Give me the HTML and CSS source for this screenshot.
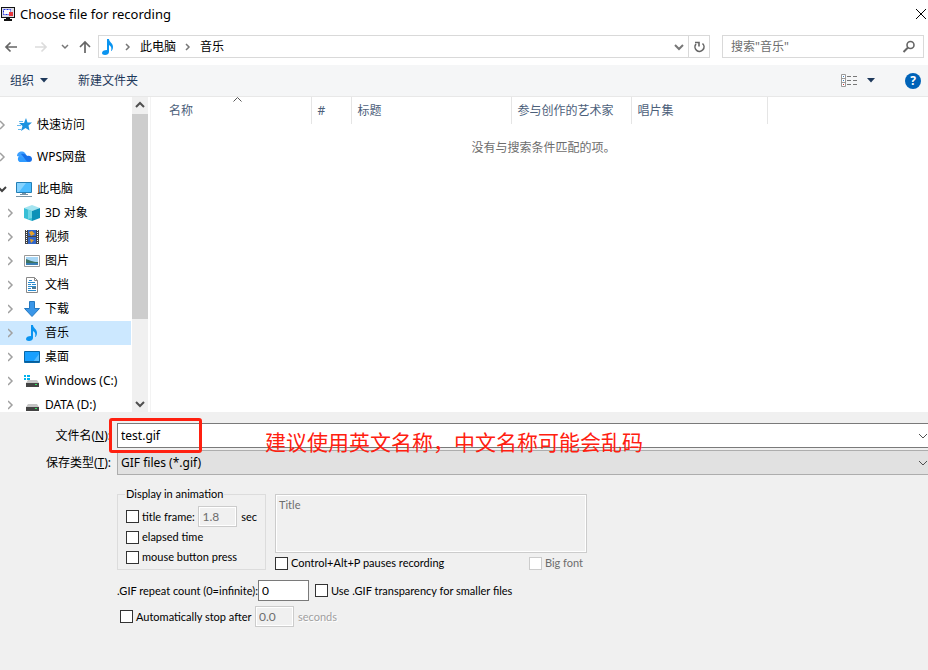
FILE: index.html
```
<!DOCTYPE html>
<html lang="zh-CN">
<head>
    <meta charset="UTF-8">
    <meta name="viewport" content="width=device-width, initial-scale=1.0">
    <title>Choose file for recording</title>
    <link rel="stylesheet" href="styles.css">
</head>
<body>
    <!-- Title Bar -->
    <header class="titlebar">
        <svg class="icon" viewBox="0 0 16 16"><path fill="#111" d="M0 1h14v11H0zM5 12h4v1h2v2H3v-2h2z"/><path fill="#dcdce8" d="M1 2h12v9H1z"/><path fill="#fff" stroke="#1c2ce0" stroke-dasharray="2 1" d="M2.500 3.500h7v5h-7z"/><path fill="#e8383c" d="M8 6h4v4H8z"/></svg>
        <h1>Choose file for recording</h1>
        <button type="button" class="close" aria-label="Close"><svg width="12" height="12" viewBox="0 0 12 12"><path d="M1 1l10 10M11 1L1 11" stroke="#000" fill="none"/></svg></button>
    </header>

    <!-- Navigation -->
    <nav class="navrow">
        <div class="history">
            <button type="button" aria-label="Back"><svg viewBox="0 0 16 16"><path d="M14 8H3M7.500 3.500L3 8l4.500 4.500" stroke="#666" stroke-width="1.700"/></svg></button>
            <button type="button" aria-label="Forward"><svg viewBox="0 0 16 16"><path d="M2 8h11M8.500 3.500L13 8l-4.500 4.500" stroke="#dcdcdc" stroke-width="1.700"/></svg></button>
            <button type="button" class="small" aria-label="Recent"><svg viewBox="0 0 10 16"><path d="M2 6l3 3 3-3" stroke="#777" stroke-width="1.500"/></svg></button>
            <button type="button" aria-label="Up"><svg viewBox="0 0 16 16"><path d="M8 14V3M3 8l5-5 5 5" stroke="#666" stroke-width="1.700"/></svg></button>
        </div>
        <div class="address">
            <svg class="icon" viewBox="0 0 16 16"><path fill="#0a94f0" d="M7 0h2c0 3 4 4 4 8 0 2-1 4-2 4 1-3 0-5-2-6v7c0 2-2 3-4 3s-3-1-3-2c0-2 2-3 5-3z"/></svg>
            <svg class="sep" viewBox="0 0 8 16"><path d="M2 5l3 3-3 3"/></svg>
            <a href="#">此电脑</a>
            <svg class="sep" viewBox="0 0 8 16"><path d="M2 5l3 3-3 3"/></svg>
            <a href="#">音乐</a>
            <button type="button" class="drop" aria-label="History"><svg viewBox="0 0 16 16"><path d="M4 6l4 4 4-4" stroke="#777" stroke-width="2"/></svg></button>
            <button type="button" class="refresh" aria-label="Refresh"><svg viewBox="0 0 16 16"><path d="M11.500 4.500A4.500 4.500 0 1 1 5 5M4 3.500h4v4" stroke="#666" stroke-width="1.600"/></svg></button>
        </div>
        <div class="search">
            <input type="text" aria-label="搜索" placeholder='搜索"音乐"'>
            <svg class="icon" viewBox="0 0 16 16"><circle cx="9.500" cy="6" r="3.500" fill="none" stroke="#666" stroke-width="1.600"/><path d="M7 8.500L2.500 13" stroke="#666" stroke-width="2"/></svg>
        </div>
    </nav>

    <!-- Toolbar -->
    <div class="toolbar">
        <button type="button" class="organize">组织 <svg width="8" height="5" viewBox="0 0 8 5"><path fill="#1e395b" d="M0 0h8L4 4.500z"/></svg></button>
        <button type="button">新建文件夹</button>
        <button type="button" class="view" aria-label="View">
            <svg width="18" height="14" viewBox="0 0 18 14"><path fill="#fff" stroke="#999" d="M.5.500h4v12h-4zM.5 4.500h4M.5 8.500h4"/><path stroke="#777" stroke-dasharray="4 2" d="M6 2.500h11M6 6.500h11M6 10.500h11"/><path fill="#3b83c4" d="M2 2h1v1H2zM2 6h1v1H2z"/><path fill="#c33" d="M2 10h1v1H2z"/></svg>
            <svg width="8" height="5" viewBox="0 0 8 5"><path fill="#1e395b" d="M0 0h8L4 4.500z"/></svg>
        </button>
        <button type="button" class="help" aria-label="Help">?</button>
    </div>

    <!-- Main Content -->
    <main class="browser">
        <ul class="tree">
            <li class="top"><a href="#">
                <svg class="icon" viewBox="0 0 16 16"><path class="arrow" d="M0 4l4 4-4 4"/></svg>
                <svg class="icon" viewBox="0 0 16 16"><path fill="#1d93e0" d="M10 1l1.500 4.500H16l-3.500 3 1 5L9.500 11 5 14l1.500-5L3 6h5z"/><path stroke="#65b9ee" d="M3 4.500h4M1 8.500h4M2 12.500h3"/></svg>
                <span>快速访问</span></a></li>
            <li class="top"><a href="#">
                <svg class="icon" viewBox="0 0 16 16"><path class="arrow" d="M0 4l4 4-4 4"/></svg>
                <svg class="icon" viewBox="0 0 16 16"><path fill="#2f9bff" d="M3.500 13a3.500 3.500 0 0 1 0-6l4-1 5 7z"/><path fill="#3ca0ff" d="M1 7c0-4 5-6 8-3l2 3-4 2z"/><path fill="#1670ea" d="M5 5c3-1 5 1 6 2 3-1 5 1 5 3s-1 3-3 3c-3 0-4-4-8-8z"/></svg>
                <span>WPS网盘</span></a></li>
            <li class="top"><a href="#">
                <svg class="icon" viewBox="0 0 16 16"><path class="arrow open" d="M-2 6l4 4 4-4"/></svg>
                <svg class="icon" viewBox="0 0 16 16"><path fill="#4cbcff" stroke="#247fb5" d="M.5 1.500h15v10H.5z"/><path fill="#86d3ff" d="M1 2h9l-7 9H1z"/><path fill="#7893a5" d="M6 12h4v1h2v1H4v-1h2zM0 15h16v1H0z"/></svg>
                <span>此电脑</span></a></li>
            <li><a href="#">
                <svg class="icon" viewBox="0 0 16 16"><path class="arrow" d="M0 4l4 4-4 4"/></svg>
                <svg class="icon" viewBox="0 0 16 16"><path fill="#a5e4f0" d="M0 3l8-3 8 3-8 3z"/><path fill="#38bfd6" d="M0 3l8 3v10l-8-3z"/><path fill="#0d91b8" d="M16 3L8 6v10l8-3z"/><path fill="#6fd6e5" d="M4 4.500L8 6v7l-4 1z"/></svg>
                <span>3D 对象</span></a></li>
            <li><a href="#">
                <svg class="icon" viewBox="0 0 16 16"><path class="arrow" d="M0 4l4 4-4 4"/></svg>
                <svg class="icon" viewBox="0 0 16 16"><path fill="#444" d="M1 1h14v14H1z"/><path fill="#3166c8" d="M4 1h8v6H4zM4 8h8v7H4z"/><path fill="#e6a22b" d="M5 3l3-1 3 3-4 2zM6 10l4 1-3 3z"/><path stroke="#fff" stroke-dasharray="1 1" d="M2.500 1v14M13.500 1v14"/></svg>
                <span>视频</span></a></li>
            <li><a href="#">
                <svg class="icon" viewBox="0 0 16 16"><path class="arrow" d="M0 4l4 4-4 4"/></svg>
                <svg class="icon" viewBox="0 0 16 16"><path fill="#fff" stroke="#999" d="M.5 2.500h15v11H.5z"/><path fill="#a7d6f5" d="M2 4h12v8H2z"/><path fill="#3d7466" d="M2 6c4 1 6 3 12 3v2H2z"/><path fill="#397eb4" d="M2 10h12v2H2z"/></svg>
                <span>图片</span></a></li>
            <li><a href="#">
                <svg class="icon" viewBox="0 0 16 16"><path class="arrow" d="M0 4l4 4-4 4"/></svg>
                <svg class="icon" viewBox="0 0 16 16"><path fill="#fff" stroke="#888" d="M2.500.500h8l3 3v12h-11z"/><path fill="none" stroke="#888" d="M10.500.500v3h3"/><path stroke="#2a8bce" d="M5 3.500h3M4 5.500h7M4 7.500h3M8 7.500h4M4 9.500h8M4 11.500h3M4 13.500h8"/><path fill="#527a92" d="M8 10h4v2H8z"/></svg>
                <span>文档</span></a></li>
            <li><a href="#">
                <svg class="icon" viewBox="0 0 16 16"><path class="arrow" d="M0 4l4 4-4 4"/></svg>
                <svg class="icon" viewBox="0 0 16 16"><path fill="#3a96e8" stroke="#2478c0" d="M5.500.500h5v7h5L8 15.500.500 7.500h5z"/></svg>
                <span>下载</span></a></li>
            <li class="selected"><a href="#">
                <svg class="icon" viewBox="0 0 16 16"><path class="arrow" d="M0 4l4 4-4 4"/></svg>
                <svg class="icon" viewBox="0 0 16 16"><path fill="#0a94f0" d="M7 0h2c0 3 4 4 4 8 0 2-1 4-2 4 1-3 0-5-2-6v7c0 2-2 3-4 3s-3-1-3-2c0-2 2-3 5-3z"/></svg>
                <span>音乐</span></a></li>
            <li><a href="#">
                <svg class="icon" viewBox="0 0 16 16"><path class="arrow" d="M0 4l4 4-4 4"/></svg>
                <svg class="icon" viewBox="0 0 16 16"><path fill="#18a0ff" stroke="#0767a8" d="M.5 2.500h15v11H.5z"/><path fill="#54bcff" d="M9 13l6-8v8z"/><path fill="#075d9a" d="M1 12h14v1H1z"/></svg>
                <span>桌面</span></a></li>
            <li><a href="#">
                <svg class="icon" viewBox="0 0 16 16"><path class="arrow" d="M0 4l4 4-4 4"/></svg>
                <svg class="icon" viewBox="0 0 16 16"><path fill="#00b2ee" d="M0 2h2v2H0zM3 2h3v2H3zM0 5h2v2H0zM3 5h3v2H3z"/><path fill="#c5c5c5" d="M4 7h9l2 3H2z"/><path fill="#444" d="M2 10h13v4H2z"/><path fill="#2ee65d" d="M11 11h2v1h-2z"/></svg>
                <span>Windows (C:)</span></a></li>
            <li><a href="#">
                <svg class="icon" viewBox="0 0 16 16"><path class="arrow" d="M0 4l4 4-4 4"/></svg>
                <svg class="icon" viewBox="0 0 16 16"><path fill="#c5c5c5" d="M4 7h9l2 3H2z"/><path fill="#444" d="M2 10h13v4H2z"/><path fill="#2ee65d" d="M11 11h2v1h-2z"/></svg>
                <span>DATA (D:)</span></a></li>
        </ul>
        <div class="scrollbar">
            <svg class="icon" viewBox="0 0 16 16"><path d="M4 10l4-4 4 4"/></svg>
            <div class="thumb"></div>
            <svg class="icon" viewBox="0 0 16 16"><path d="M4 6l4 4 4-4"/></svg>
        </div>
        <section class="files">
            <table>
                <thead>
                    <tr>
                        <th class="name">名称<svg class="sort" width="9" height="5" viewBox="0 0 9 5"><path d="M.5 4.500l4-4 4 4" fill="none" stroke="#555"/></svg></th>
                        <th class="num">#</th>
                        <th class="title">标题</th>
                        <th class="artist">参与创作的艺术家</th>
                        <th class="album">唱片集</th>
                    </tr>
                </thead>
            </table>
            <p class="empty">没有与搜索条件匹配的项。</p>
        </section>
    </main>

    <!-- File name and options -->
    <form class="panel">
        <div class="fields">
            <label for="fileName">文件名(<u>N</u>):</label>
            <div class="combo marked">
                <input type="text" id="fileName" value="test.gif">
                <svg class="icon" viewBox="0 0 16 16"><path d="M5 6l4 4 4-4"/></svg>
                <div class="mark"></div>
                <div class="note">建议使用英文名称，中文名称可能会乱码</div>
            </div>
            <label for="fileType">保存类型(<u>T</u>):</label>
            <div class="combo">
                <select id="fileType"><option>GIF files (*.gif)</option></select>
                <svg class="icon" viewBox="0 0 16 16"><path d="M5 6l4 4 4-4"/></svg>
            </div>
        </div>

        <div class="options">
            <div class="option-row top-row">
                <fieldset>
                    <legend>Display in animation</legend>
                    <div class="line">
                        <label class="check"><input type="checkbox"> title frame:</label>
                        <input type="text" class="num-box" value="1.8" aria-label="seconds" disabled>
                        <span>sec</span>
                    </div>
                    <label class="check"><input type="checkbox"> elapsed time</label>
                    <label class="check"><input type="checkbox"> mouse button press</label>
                </fieldset>
                <div class="title-box">
                    <textarea aria-label="Title" disabled>Title</textarea>
                    <div class="under">
                        <label class="check"><input type="checkbox"> Control+Alt+P pauses recording</label>
                        <label class="check off"><input type="checkbox" disabled> Big font</label>
                    </div>
                </div>
            </div>
            <div class="option-row">
                <label class="repeat" for="repeat">.GIF repeat count (0=infinite):</label>
                <input type="text" id="repeat" class="num-box wide" value="0">
                <label class="check"><input type="checkbox"> Use .GIF transparency for smaller files</label>
            </div>
            <div class="option-row">
                <label class="check auto"><input type="checkbox"> Automatically stop after</label>
                <input type="text" class="num-box" value="0.0" aria-label="stop after" disabled>
                <span class="seconds">seconds</span>
            </div>
        </div>
    </form>
</body>
</html>
```
FILE: styles.css
```
* {
    box-sizing: border-box;
}

body {
    margin: 0;
    height: 100vh;
    display: flex;
    flex-direction: column;
    overflow: hidden;
    background-color: white;
    color: black;
    font-family: "Noto Sans", "Noto Sans CJK SC", sans-serif;
    font-size: 12px;
    line-height: 16px;
}

button, input, select, textarea {
    font: inherit;
    color: inherit;
    margin: 0;
}

button {
    border: none;
    padding: 0;
    background: none;
    display: flex;
    align-items: center;
}

a {
    color: inherit;
    text-decoration: none;
}

svg {
    fill: none;
    flex: none;
}

.icon {
    width: 16px;
    height: 16px;
}

/* title bar */
.titlebar {
    display: flex;
    align-items: center;
    height: 28px;
    padding: 0 1px;
}

h1 {
    flex: 1;
    margin: 0 3px;
    font-size: 13px;
    font-weight: normal;
}

/* navigation */
.navrow {
    display: flex;
    align-items: center;
    padding: 7px 4px 7px 3px;
}

.history {
    display: flex;
    align-items: center;
    gap: 14px;
    width: 95px;
}

.history svg, .drop svg, .refresh svg {
    width: 16px;
    height: 16px;
}

.history .small {
    margin-left: -3px;
    margin-right: -7px;
}

.history .small svg {
    width: 10px;
}

.address {
    flex: 1;
    display: flex;
    align-items: center;
    height: 23px;
    border: 1px solid #d9d9d9;
    padding-left: 1px;
}

.sep {
    width: 8px;
    height: 16px;
    margin: 0 8px;
    stroke: #777;
    stroke-width: 1.5;
}

.drop {
    margin-left: auto;
    padding-right: 1px;
}

.refresh {
    height: 100%;
    border-left: 1px solid #d9d9d9;
    padding: 0 2px;
}

.search {
    display: flex;
    align-items: center;
    width: 202px;
    height: 23px;
    margin-left: 12px;
    padding: 0 6px 0 8px;
    border: 1px solid #d9d9d9;
}

.search input {
    flex: 1;
    min-width: 0;
    border: none;
    padding: 0;
    outline: none;
}

.search input::placeholder {
    color: #6d6d6d;
}

/* toolbar */
.toolbar {
    display: flex;
    align-items: center;
    height: 32px;
    padding: 0 7px 0 10px;
    background-color: #f5f6f7;
    border-bottom: 1px solid #e8e8e8;
    color: #1e395b;
}

.organize {
    gap: 6px;
    margin-right: 30px;
}

.view {
    gap: 8px;
    margin-left: auto;
    margin-right: 30px;
}

.help {
    justify-content: center;
    width: 16px;
    height: 16px;
    border-radius: 50%;
    background-color: #0063b8;
    color: white;
    font-weight: bold;
}

/* folder tree and file list */
.browser {
    flex: 1;
    min-height: 0;
    display: flex;
    overflow: hidden;
}

.tree {
    width: 131px;
    margin: 0;
    padding: 16px 0 0;
    list-style: none;
}

.tree a {
    display: flex;
    align-items: center;
    height: 24px;
    padding-left: 8px;
    white-space: nowrap;
}

.tree .top {
    margin-bottom: 8px;
}

.tree .top:nth-child(3) {
    margin-bottom: 0;
}

.tree .top a {
    padding-left: 0;
}

.tree span {
    margin-left: 5px;
}

.tree .selected {
    background-color: #cce8ff;
}

.arrow {
    stroke: #a0a0a0;
    stroke-width: 1.5;
}

.arrow.open {
    stroke: #404040;
    stroke-width: 2;
}

.scrollbar {
    display: flex;
    flex-direction: column;
    align-items: center;
    width: 16px;
    margin-left: 1px;
    background-color: #f0f0f0;
    stroke: #505050;
    stroke-width: 2;
}

.thumb {
    width: 100%;
    height: 65%;
    margin: 1px 0 auto;
    background-color: #cdcdcd;
}

.files {
    flex: 1;
    margin-left: 2px;
    border-left: 1px solid #f3f3f3;
}

table {
    table-layout: fixed;
    width: 617px;
    border-collapse: collapse;
}

th {
    position: relative;
    height: 27px;
    padding: 0 6px;
    border-right: 1px solid #e5e5e5;
    text-align: left;
    font-weight: normal;
    color: #4c607a;
}

.name {
    width: 160px;
    padding-left: 18px;
}

.num {
    width: 40px;
}

.title {
    width: 160px;
}

.artist {
    width: 120px;
}

.sort {
    position: absolute;
    top: 0;
    left: 82px;
}

.empty {
    margin: 16px 0 0 8px;
    text-align: center;
    color: #6d6d6d;
}

/* bottom panel */
.panel {
    padding: 11px 0 38px;
    background-color: #f0f0f0;
}

.fields {
    display: grid;
    grid-template-columns: 111px 1fr;
    column-gap: 6px;
    row-gap: 2px;
    align-items: center;
}

.fields label {
    text-align: right;
}

.combo {
    position: relative;
    height: 25px;
}

.combo.marked {
    z-index: 1;
}

.combo input, .combo select {
    width: 100%;
    height: 100%;
    border: 1px solid #7a7a7a;
    border-right: none;
    border-radius: 0;
    padding: 0 3px;
    background-color: white;
    appearance: none;
    outline: none;
}

.combo select {
    border-color: #adadad;
    background-color: #e1e1e1;
}

.combo .icon {
    position: absolute;
    right: -2px;
    top: 5px;
    stroke: #505050;
}

.mark {
    position: absolute;
    left: -8px;
    top: -5px;
    width: 93px;
    height: 35px;
    border: 3px solid #ff2010;
    border-radius: 3px;
}

.note {
    position: absolute;
    left: 148px;
    top: 7px;
    font-size: 21px;
    line-height: 24px;
    white-space: nowrap;
    color: #ff2010;
}

.options {
    padding: 12px 0 0 117px;
    font-family: Lato, sans-serif;
    font-size: 11px;
    line-height: 14px;
}

.option-row {
    display: flex;
    align-items: center;
    height: 21px;
    margin-bottom: 5px;
}

.top-row {
    align-items: flex-start;
    gap: 9px;
    height: auto;
    margin-bottom: 7px;
}

fieldset {
    width: 149px;
    height: 83px;
    margin: 0;
    padding: 5px 8px;
    border: 1px solid #dcdcdc;
}

legend {
    padding: 0 1px;
    margin-left: -1px;
}

.line {
    display: flex;
    align-items: center;
    justify-content: space-between;
}

.check {
    display: flex;
    align-items: center;
    gap: 3px;
    height: 20px;
    white-space: nowrap;
}

.check input {
    appearance: none;
    width: 13px;
    height: 13px;
    border: 1px solid #333;
    background-color: white;
}

.check input:disabled {
    border-color: #ccc;
}

.off {
    color: #6d6d6d;
}

.num-box {
    width: 39px;
    height: 21px;
    padding: 0 3px;
    border: 1px solid #7a7a7a;
    border-radius: 0;
    background-color: white;
    font-size: 12px;
}

.num-box:disabled, textarea:disabled {
    border-color: #ccc;
    background-color: #f0f0f0;
    box-shadow: inset 0 0 0 1px white;
    color: #6d6d6d;
}

.num-box.wide {
    width: 51px;
    margin-right: 6px;
}

.title-box {
    margin-top: 7px;
}

textarea {
    display: block;
    width: 312px;
    height: 59px;
    padding: 3px;
    border: 1px solid #ccc;
    resize: none;
}

.under {
    display: flex;
    justify-content: space-between;
    padding-right: 4px;
}

.repeat {
    width: 141px;
    white-space: nowrap;
}

.auto {
    width: 138px;
    padding-left: 3px;
}

.seconds {
    margin-left: 4px;
    color: #a0a0a0;
    text-shadow: 1px 1px white;
}
```
